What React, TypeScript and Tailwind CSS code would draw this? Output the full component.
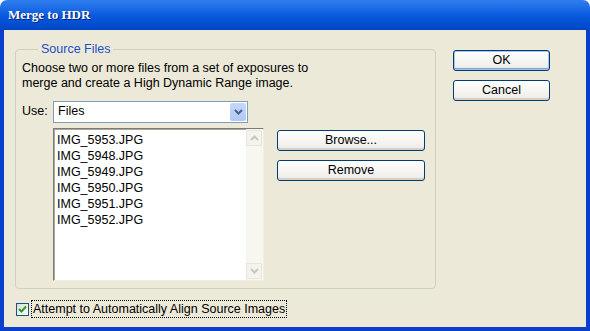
const files = ['IMG_5953.JPG', 'IMG_5948.JPG', 'IMG_5949.JPG', 'IMG_5950.JPG', 'IMG_5951.JPG', 'IMG_5952.JPG'];

const XpButton = ({ label, isDefault = false }: { label: string; isDefault?: boolean }) => (
    <button
        className={`h-[21px] w-full rounded-[3px] border border-[#003C74] bg-gradient-to-b from-white to-[#ECEBE6] text-[12.5px] leading-none text-black ${isDefault ? 'shadow-[inset_0_0_0_1px_#A9C3F0,inset_0_-1px_0_1px_#7DA2CE]' : 'shadow-[inset_0_-2px_0_#D6D0C5]'}`}
    >
        {label}
    </button>
);

const Chevron = ({ up = false, color }: { up?: boolean; color: string }) => (
    <svg width="9" height="6" viewBox="0 0 9 6">
        <path d={up ? 'M1 5 L4.5 1.5 L8 5' : 'M1 1 L4.5 4.5 L8 1'} fill="none" stroke={color} strokeWidth="2" />
    </svg>
);

const App = () => {
    return (
        <div className="flex h-[331px] w-[590px] flex-col overflow-hidden font-['Liberation_Sans',Arial,sans-serif] text-[12.5px] text-black">
            {/* Title bar */}
            <div className="flex h-[30px] shrink-0 items-center rounded-t-[7px] bg-gradient-to-b from-[#2F7FF0] via-[#0A5BDF] to-[#0046C6] pl-[8px]">
                <span className="font-['Liberation_Serif',serif] text-[13px] font-bold text-white [text-shadow:1px_1px_0_#0A1E70]">
                    Merge to HDR
                </span>
            </div>

            {/* Window frame */}
            <div className="flex flex-1 border-x-[4px] border-b-[4px] border-x-[#0A3FCB] border-b-[#0A3FCB] bg-[#ECE9D8]">
                <div className="flex flex-1 pl-[11px] pt-[10px]">
                    {/* Left column */}
                    <div className="flex w-[421px] flex-col">
                        <fieldset className="h-[249px] rounded-[4px] border border-[#D0D0BF] px-[6px]">
                            <legend className="ml-[16px] px-[3px] text-[#1E4FC4]">Source Files</legend>
                            <p className="mt-[2px] leading-[15px]">
                                Choose two or more files from a set of exposures to
                                <br />
                                merge and create a High Dynamic Range image.
                            </p>

                            <div className="mt-[10px] flex items-center">
                                <span className="w-[31px]">Use:</span>
                                <div className="flex h-[22px] w-[195px] items-center border border-[#7F9DB9] bg-white pl-[4px]">
                                    <span className="flex-1">Files</span>
                                    <div className="mr-[1px] flex h-[18px] w-[16px] items-center justify-center rounded-[2px] bg-gradient-to-b from-[#C6D7FC] to-[#B0C8F7]">
                                        <Chevron color="#4D6185" />
                                    </div>
                                </div>
                            </div>

                            <div className="mt-[5px] flex items-start">
                                <div className="ml-[31px] flex h-[153px] w-[211px] border border-b-[#F1EFE2] border-l-[#7A7A7A] border-r-[#F1EFE2] border-t-[#7A7A7A] bg-white shadow-[inset_1px_1px_0_#ACA899]">
                                    <ul className="flex-1 pl-[3px] pt-[3px] leading-[16px]">
                                        {files.map((f) => (
                                            <li key={f}>{f}</li>
                                        ))}
                                    </ul>
                                    <div className="flex w-[17px] flex-col justify-between bg-[#F7F6F0] py-[1px] pr-[1px]">
                                        <div className="flex h-[16px] items-center justify-center border border-[#E8E6DA] bg-[#F4F3EE]">
                                            <Chevron up color="#C9C7BA" />
                                        </div>
                                        <div className="flex h-[16px] items-center justify-center border border-[#E8E6DA] bg-[#F4F3EE]">
                                            <Chevron color="#C9C7BA" />
                                        </div>
                                    </div>
                                </div>
                                <div className="ml-[13px] mt-[2px] flex w-[148px] flex-col gap-[9px]">
                                    <XpButton label="Browse..." />
                                    <XpButton label="Remove" />
                                </div>
                            </div>
                        </fieldset>

                        <div className="mt-[11px] flex items-center pl-[1px]">
                            <div className="flex h-[13px] w-[13px] items-center justify-center border border-[#1C5180] bg-gradient-to-br from-[#DCDCD7] to-white">
                                <svg width="9" height="8" viewBox="0 0 9 8">
                                    <path d="M1 4 L3.5 6.5 L8 1.5" fill="none" stroke="#21A121" strokeWidth="2" />
                                </svg>
                            </div>
                            <span className="ml-[2px] border border-dotted border-black px-[1px] leading-[16px]">
                                Attempt to Automatically Align Source Images
                            </span>
                        </div>
                    </div>

                    {/* Right column */}
                    <div className="ml-[17px] mt-[10px] flex w-[97px] flex-col gap-[9px]">
                        <XpButton label="OK" isDefault />
                        <XpButton label="Cancel" />
                    </div>
                </div>
            </div>
        </div>
    );
};

export default App;
